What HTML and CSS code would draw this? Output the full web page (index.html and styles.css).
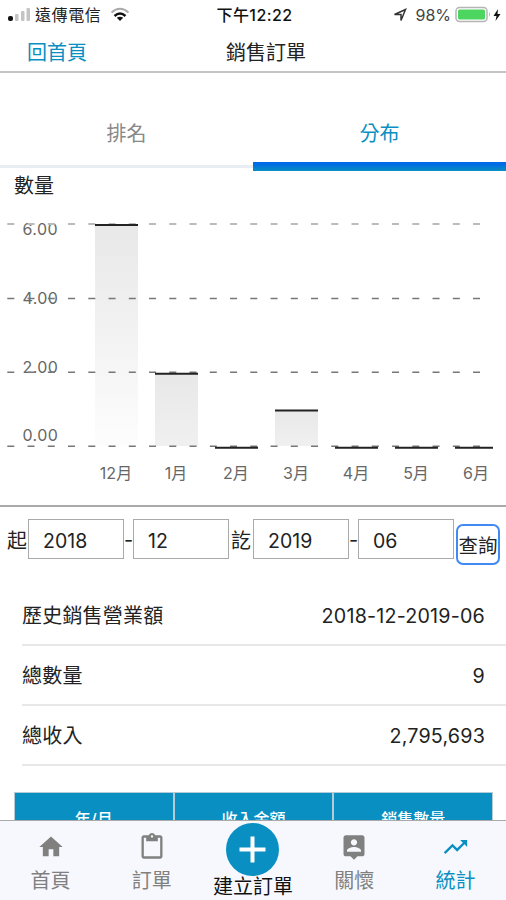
FILE: index.html
```html
<!DOCTYPE html>
<html lang="zh-Hant">
<head>
    <meta charset="UTF-8">
    <meta name="viewport" content="width=device-width, initial-scale=1.0">
    <title>銷售訂單</title>
    <link rel="stylesheet" href="styles.css">
</head>
<body>
    <div class="app">
        <div class="status-bar">
            <div class="status-left">
                <svg class="signal" width="24" height="16" viewBox="0 0 24 16">
                    <rect x="0" y="9" width="5" height="5" rx="2" fill="#111"/>
                    <rect x="7" y="7" width="3.5" height="7" rx="1" fill="#c4c4c4"/>
                    <rect x="13" y="4" width="3.5" height="10" rx="1" fill="#c4c4c4"/>
                    <rect x="18.500" y="1" width="3.500" height="13" rx="1" fill="#c4c4c4"/>
                </svg>
                <span class="carrier">遠傳電信</span>
                <svg class="wifi" width="20" height="16" viewBox="0 0 20 16" fill="none">
                    <path d="M1.500 5.500Q10-2 18.500 5.500" stroke="#aaa" stroke-width="2"/>
                    <path d="M4.500 9Q10 4 15.500 9" stroke="#111" stroke-width="2.400"/>
                    <path d="M6.800 10.800Q10 8.500 13.200 10.800L10 14z" fill="#111"/>
                </svg>
            </div>
            <div class="status-time">下午12:22</div>
            <div class="status-right">
                <svg class="location" width="14" height="14" viewBox="0 0 14 14">
                    <path d="M1.500 6.500L12.500 1.500L8 12.500V6.500z" fill="none" stroke="#333" stroke-width="1.500"/>
                </svg>
                <span class="percent">98%</span>
                <svg class="battery" width="38" height="18" viewBox="0 0 38 18">
                    <rect x="1" y="1.500" width="31" height="14" rx="3.500" fill="#fff" stroke="#b5b5b5" stroke-width="1.500"/>
                    <rect x="3" y="3.500" width="27" height="10" rx="1.500" fill="#4cd55f"/>
                    <path d="M34 6q2 2.500 0 5z" fill="#b5b5b5"/>
                </svg>
                <svg class="bolt" width="8" height="14" viewBox="0 0 8 14">
                    <path d="M5 1L0.500 8H3.500L2.500 13L7.500 6H4.500z" fill="#111"/>
                </svg>
            </div>
        </div>

        <header class="header">
            <a class="back">回首頁</a>
            <h1>銷售訂單</h1>
        </header>

        <main class="content">
            <div class="tabs">
                <div class="tab">排名</div>
                <div class="tab active">分布</div>
            </div>

            <div class="chart">
                <svg width="506" height="334" viewBox="0 171 506 334">
                    <defs>
                        <linearGradient id="bar-tall" x1="0" y1="0" x2="0" y2="1">
                            <stop offset="0" stop-color="#e8e8e8"/>
                            <stop offset="1" stop-color="#fdfdfd"/>
                        </linearGradient>
                        <linearGradient id="bar-short" x1="0" y1="0" x2="0" y2="1">
                            <stop offset="0" stop-color="#e8e8e8"/>
                            <stop offset="1" stop-color="#f0f0f0"/>
                        </linearGradient>
                    </defs>
                    <text class="chart-title" x="14" y="193">數量</text>
                    <rect x="95" y="225" width="43" height="221" fill="url(#bar-tall)"/>
                    <rect x="155" y="374" width="43" height="72" fill="url(#bar-short)"/>
                    <rect x="275" y="410" width="43" height="36" fill="url(#bar-short)"/>
                    <g class="axis-y">
                        <text x="22.500" y="235">6.00</text>
                        <text x="22.500" y="304">4.00</text>
                        <text x="22.500" y="373">2.00</text>
                        <text x="22.500" y="441">0.00</text>
                    </g>
                    <g class="grid">
                        <path class="grid-top" d="M7.300 224H481"/>
                        <path d="M7.300 298.400H481"/>
                        <path d="M7.300 372.300H481"/>
                        <path d="M7.300 446.300H481"/>
                    </g>
                    <g class="bar-line">
                        <path d="M95 225H138"/>
                        <path d="M155 373.700H198"/>
                        <path d="M215 447.700H258"/>
                        <path d="M275 410.500H318"/>
                        <path d="M335 447.700H378"/>
                        <path d="M395 447.700H438"/>
                        <path d="M455 447.700H493"/>
                    </g>
                    <g class="axis-x">
                        <text x="116" y="479">12月</text>
                        <text x="176" y="479">1月</text>
                        <text x="236" y="479">2月</text>
                        <text x="296" y="479">3月</text>
                        <text x="356" y="479">4月</text>
                        <text x="416" y="479">5月</text>
                        <text x="476" y="479">6月</text>
                    </g>
                </svg>
            </div>

            <form class="search">
                <label>起</label>
                <input type="text" value="2018">
                <span class="dash">-</span>
                <input type="text" value="12">
                <label class="label-end">訖</label>
                <input type="text" value="2019">
                <span class="dash">-</span>
                <input type="text" value="06">
                <button type="button" class="search-btn">查詢</button>
            </form>

            <div class="summary">
                <div class="row"><span>歷史銷售營業額</span><span class="value">2018-12-2019-06</span></div>
                <div class="row"><span>總數量</span><span class="value">9</span></div>
                <div class="row"><span>總收入</span><span class="value">2,795,693</span></div>
            </div>

            <div class="table-head">
                <div>年/月</div>
                <div>收入金額</div>
                <div>銷售數量</div>
            </div>
        </main>

        <nav class="tabbar">
            <a class="item">
                <svg width="28" height="28" viewBox="0 0 24 24"><path fill="currentColor" d="M10 20v-6h4v6h5v-8h3L12 3 2 12h3v8z"/></svg>
                <span>首頁</span>
            </a>
            <a class="item">
                <svg width="28" height="28" viewBox="0 0 24 24"><path fill="currentColor" d="M19 2h-4.180C14.400.840 13.300 0 12 0S9.600.840 9.180 2H5c-1.100 0-2 .9-2 2v16c0 1.100.9 2 2 2h14c1.100 0 2-.9 2-2V4c0-1.100-.9-2-2-2zm-7 0c.55 0 1 .45 1 1s-.45 1-1 1-1-.45-1-1 .45-1 1-1zm7 18H5V4h2v3h10V4h2z"/></svg>
                <span>訂單</span>
            </a>
            <a class="item create">
                <svg width="53" height="53" viewBox="0 0 53 53">
                    <circle cx="26.500" cy="26.500" r="26.500" fill="#0a8fc2"/>
                    <path d="M26.500 13.500V39.500M13.500 26.500H39.500" stroke="#fff" stroke-width="4"/>
                </svg>
                <span>建立訂單</span>
            </a>
            <a class="item">
                <svg width="28" height="28" viewBox="0 0 24 24"><path fill="currentColor" d="M19 2H5c-1.100 0-2 .9-2 2v14c0 1.100.9 2 2 2h4l3 3 3-3h4c1.100 0 2-.9 2-2V4c0-1.100-.9-2-2-2zm-7 3.300c1.490 0 2.700 1.210 2.700 2.700s-1.210 2.700-2.700 2.700S9.300 9.490 9.300 8s1.210-2.700 2.700-2.700zM18 16H6v-.9c0-2 4-3.100 6-3.100s6 1.100 6 3.100z"/></svg>
                <span>關懷</span>
            </a>
            <a class="item active">
                <svg width="29" height="28" viewBox="0 0 24 24"><path fill="currentColor" d="M16 6l2.290 2.290-4.880 4.880-4-4L2 16.590 3.410 18l6-6 4 4 6.300-6.290L22 12V6z"/></svg>
                <span>統計</span>
            </a>
        </nav>
    </div>
</body>
</html>
```

FILE: styles.css
```css
:root {
    --primary: #0a8fc2;
    --text: #222;
    --muted: #888;
}
* {
    margin: 0;
    padding: 0;
    box-sizing: border-box;
}
body {
    font-family: Inter, "Noto Sans CJK TC", sans-serif;
    font-size: 20px;
    line-height: 30px;
    color: var(--text);
    background: #fff;
}
.app {
    width: 506px;
    height: 900px;
    display: flex;
    flex-direction: column;
    overflow: hidden;
}
svg {
    display: block;
    flex: none;
}

/* status bar */
.status-bar {
    height: 28px;
    padding: 0 5px 0 8px;
    display: grid;
    grid-template-columns: 1fr 80px 1fr;
    align-items: center;
    font-size: 16px;
    line-height: 30px;
    white-space: nowrap;
}
.status-left, .status-right {
    display: flex;
    align-items: center;
}
.status-right {
    justify-content: flex-end;
}
.carrier {
    margin: 0 9px 0 3px;
    letter-spacing: 0.6px;
}
.status-time {
    font-weight: 500;
    letter-spacing: 0.4px;
    text-align: center;
    color: #111;
}
.percent {
    margin: 0 4px 0 8px;
    color: #444;
}

/* header */
.header {
    height: 45px;
    padding: 7px 13px 0 27px;
    display: grid;
    grid-template-columns: 1fr 82px 1fr;
    align-items: center;
    border-bottom: 2px solid #c4c4c4;
}
.back {
    color: var(--primary);
}
.header h1 {
    padding-left: 7px;
    font-size: 20px;
    font-weight: 400;
    white-space: nowrap;
}

/* content */
.content {
    flex: 1;
    min-height: 0;
    overflow: hidden;
}
.tabs {
    height: 98px;
    display: flex;
}
.tab {
    flex: 1;
    height: 95px;
    padding-top: 46px;
    text-align: center;
    color: var(--muted);
    border-bottom: 3px solid #e9eef2;
}
.tab.active {
    height: 98px;
    color: var(--primary);
    border-bottom: 9px solid;
    border-image: linear-gradient(#0068ea 0%, #0068ea 91%, #0070e0 94%, #0a8fc2 100%) 9;
}
.chart {
    border-bottom: 2px solid #aaa;
}
.chart-title {
    font-size: 20px;
    fill: var(--text);
}
.axis-y {
    font-size: 16px;
    letter-spacing: 0.4px;
    fill: #666;
}
.axis-x {
    font-size: 16px;
    fill: #666;
    text-anchor: middle;
}
.grid {
    fill: none;
    stroke: #777;
    stroke-width: 1.5;
    stroke-dasharray: 7 13.25;
}
.grid-top {
    stroke: #bbb;
    stroke-width: 2;
}
.bar-line {
    stroke: #222;
    stroke-width: 2;
}

/* search */
.search {
    height: 79px;
    padding: 12px 6px 0 7px;
    display: flex;
    align-items: flex-start;
}
.search label {
    width: 21px;
    padding-top: 7px;
}
.search .label-end {
    width: 24px;
    padding-left: 2px;
}
.search input {
    width: 96px;
    height: 40px;
    padding: 3px 0 0 14px;
    border: 1px solid #aaa;
    background: #fff;
    font-family: inherit;
    font-size: 19.5px;
    color: var(--text);
}
.dash {
    width: 9px;
    padding-top: 6px;
    text-align: center;
}
.search-btn {
    width: 44px;
    height: 41px;
    margin: 5px 0 0 2px;
    border: 2px solid #4189f5;
    border-radius: 7px;
    background: #fff;
    font-family: inherit;
    font-size: 19.5px;
    white-space: nowrap;
    color: var(--text);
    display: flex;
    align-items: center;
    justify-content: center;
}

/* summary */
.summary {
    padding-left: 22px;
}
.row {
    height: 60px;
    padding: 2px 21px 0 0;
    display: flex;
    align-items: center;
    justify-content: space-between;
    border-bottom: 2px solid #e8e8e8;
    letter-spacing: 0.2px;
}
.value {
    font-size: 19.7px;
}

/* table */
.table-head {
    width: 479px;
    height: 54px;
    margin: 26px 0 0 14px;
    padding: 1px;
    display: grid;
    grid-template-columns: repeat(3, 1fr);
    gap: 2px;
    background: #b5cbd5;
}
.table-head div {
    background: var(--primary);
    color: #fff;
    font-size: 16px;
    font-weight: 500;
    line-height: 52px;
    text-align: center;
}

/* bottom nav */
.tabbar {
    height: 80px;
    display: grid;
    grid-template-columns: repeat(5, 1fr);
    border-top: 1px solid #aaa;
    background: #f7f8fd;
}
.item {
    padding-top: 12px;
    display: flex;
    flex-direction: column;
    align-items: center;
    gap: 5px;
    color: #808080;
    white-space: nowrap;
}
.item.active {
    color: var(--primary);
}
.item.create {
    padding-top: 2px;
    gap: 0;
    line-height: 23px;
    color: #111;
}
```
